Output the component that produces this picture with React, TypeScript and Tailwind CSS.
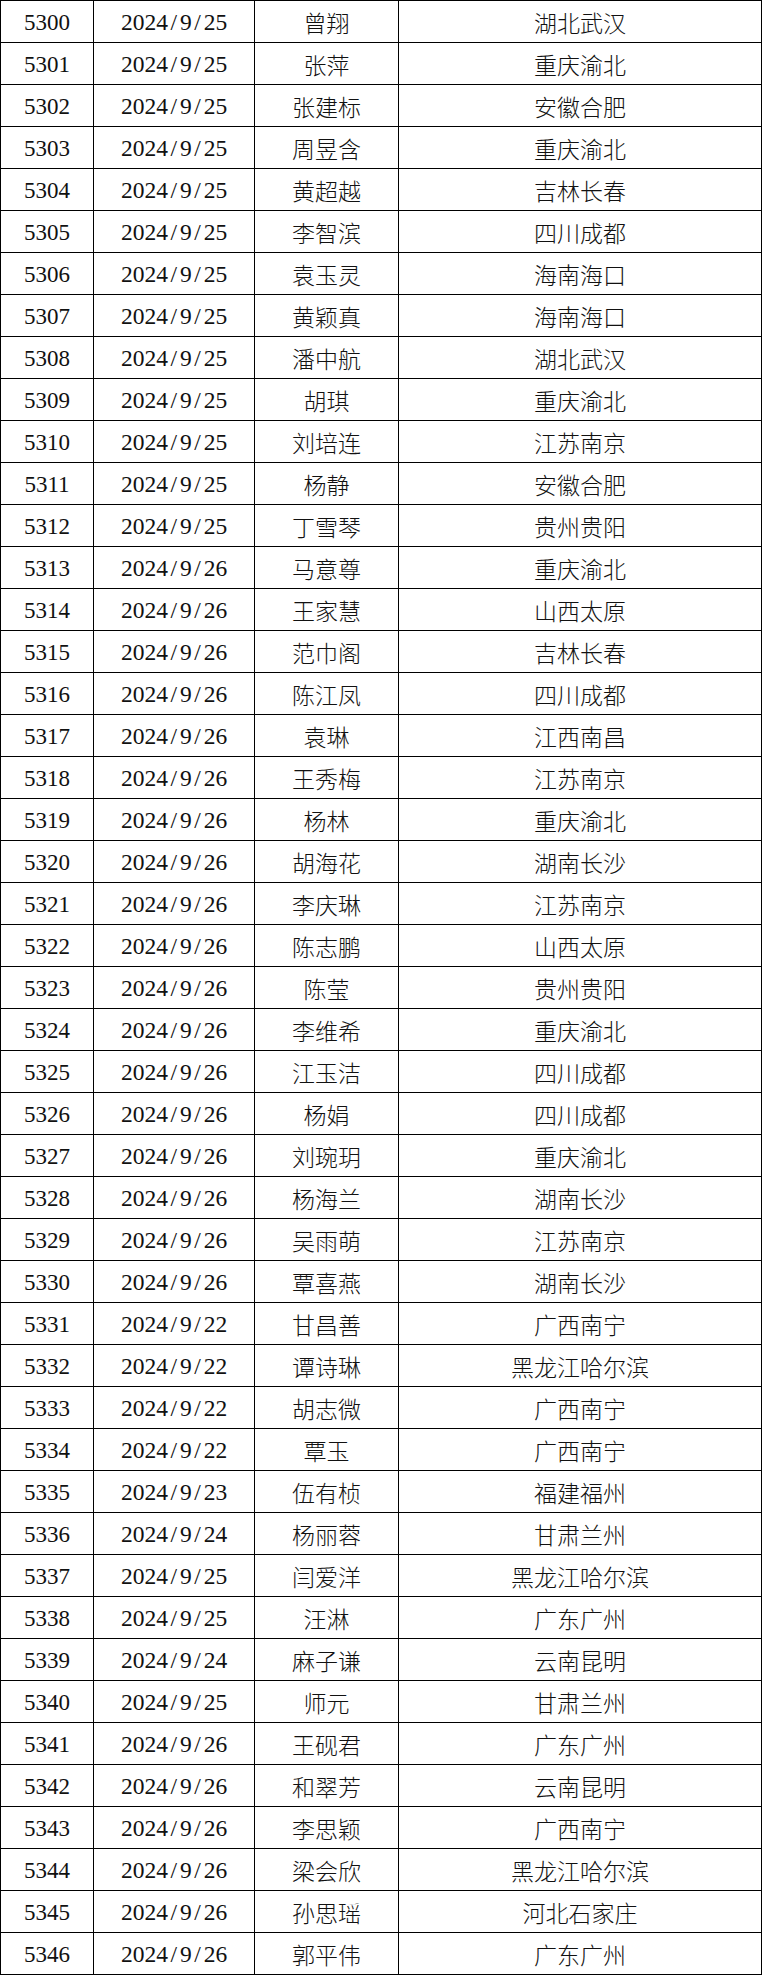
import React from "react";

const raw = `5300|2024/9/25|曾翔|湖北武汉
5301|2024/9/25|张萍|重庆渝北
5302|2024/9/25|张建标|安徽合肥
5303|2024/9/25|周昱含|重庆渝北
5304|2024/9/25|黄超越|吉林长春
5305|2024/9/25|李智滨|四川成都
5306|2024/9/25|袁玉灵|海南海口
5307|2024/9/25|黄颖真|海南海口
5308|2024/9/25|潘中航|湖北武汉
5309|2024/9/25|胡琪|重庆渝北
5310|2024/9/25|刘培连|江苏南京
5311|2024/9/25|杨静|安徽合肥
5312|2024/9/25|丁雪琴|贵州贵阳
5313|2024/9/26|马意尊|重庆渝北
5314|2024/9/26|王家慧|山西太原
5315|2024/9/26|范巾阁|吉林长春
5316|2024/9/26|陈江凤|四川成都
5317|2024/9/26|袁琳|江西南昌
5318|2024/9/26|王秀梅|江苏南京
5319|2024/9/26|杨林|重庆渝北
5320|2024/9/26|胡海花|湖南长沙
5321|2024/9/26|李庆琳|江苏南京
5322|2024/9/26|陈志鹏|山西太原
5323|2024/9/26|陈莹|贵州贵阳
5324|2024/9/26|李维希|重庆渝北
5325|2024/9/26|江玉洁|四川成都
5326|2024/9/26|杨娟|四川成都
5327|2024/9/26|刘琬玥|重庆渝北
5328|2024/9/26|杨海兰|湖南长沙
5329|2024/9/26|吴雨萌|江苏南京
5330|2024/9/26|覃喜燕|湖南长沙
5331|2024/9/22|甘昌善|广西南宁
5332|2024/9/22|谭诗琳|黑龙江哈尔滨
5333|2024/9/22|胡志微|广西南宁
5334|2024/9/22|覃玉|广西南宁
5335|2024/9/23|伍有桢|福建福州
5336|2024/9/24|杨丽蓉|甘肃兰州
5337|2024/9/25|闫爱洋|黑龙江哈尔滨
5338|2024/9/25|汪淋|广东广州
5339|2024/9/24|麻子谦|云南昆明
5340|2024/9/25|师元|甘肃兰州
5341|2024/9/26|王砚君|广东广州
5342|2024/9/26|和翠芳|云南昆明
5343|2024/9/26|李思颖|广西南宁
5344|2024/9/26|梁会欣|黑龙江哈尔滨
5345|2024/9/26|孙思瑶|河北石家庄
5346|2024/9/26|郭平伟|广东广州`;

const rows = raw.split("\n").map((l) => l.split("|"));

function DateText({ value }: { value: string }) {
  const parts = value.split("/");
  return (
    <span>
      {parts.map((p, i) => (
        <React.Fragment key={i}>
          {i > 0 && <span className="inline-block w-[12px] text-center">/</span>}
          {p}
        </React.Fragment>
      ))}
    </span>
  );
}

export default function App() {
  return (
    <div className="w-[762px] bg-white text-[#111] border-l border-t border-black">
      {rows.map(([id, date, name, place]) => (
        <div key={id} className="flex h-[42px] border-b border-black">
          <div className="w-[93px] border-r border-black flex items-center justify-center pt-[3px] font-['Liberation_Serif',serif] text-[23px]">
            {id}
          </div>
          <div className="w-[161px] border-r border-black flex items-center justify-center pt-[3px] font-['Liberation_Serif',serif] text-[23.5px]">
            <DateText value={date} />
          </div>
          <div className="w-[144px] border-r border-black flex items-center justify-center pt-[2px] font-['Noto_Sans_CJK_SC',sans-serif] font-light text-[23px]">
            {name}
          </div>
          <div className="w-[363px] border-r border-black flex items-center justify-center pt-[2px] font-['Noto_Sans_CJK_SC',sans-serif] font-light text-[23px]">
            {place}
          </div>
        </div>
      ))}
    </div>
  );
}
